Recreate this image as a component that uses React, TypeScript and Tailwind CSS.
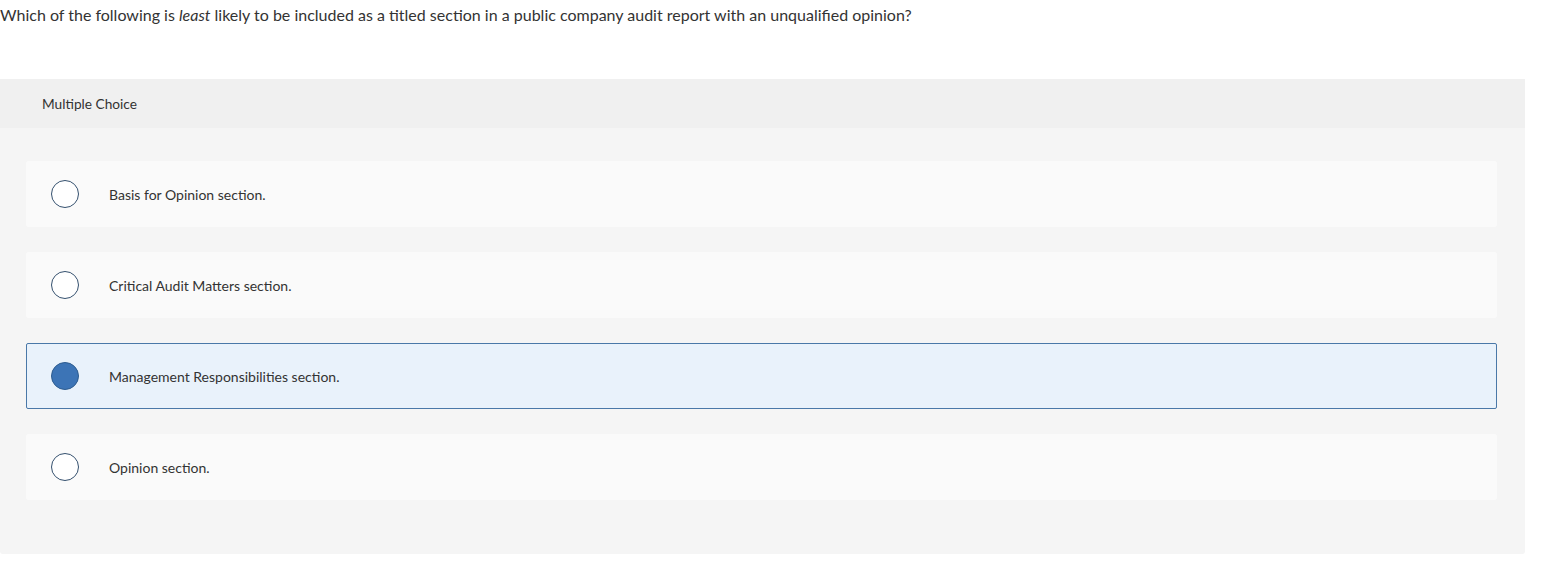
import React from "react";

const options = [
  "Basis for Opinion section.",
  "Critical Audit Matters section.",
  "Management Responsibilities section.",
  "Opinion section.",
];

export default function App() {
  const selected = 2;
  return (
    <div className="min-h-[577px] bg-white text-[#333333] [font-family:Lato,'Open_Sans',sans-serif]">
      <p className="pt-[5px] text-[16px] leading-[20px]">
        Which of the following is <i>least</i> likely to be included as a titled section in a public company audit report with an unqualified opinion?
      </p>

      <div className="mt-[54px] w-[1525px] rounded-[3px] bg-[#f5f5f5]">
        <div className="flex h-[49px] items-center bg-[#f0f0f0] pl-[42px] pt-[1px] text-[13.7px]">Multiple Choice</div>
        <div className="flex flex-col gap-[25px] pb-[54px] pl-[26px] pr-[28px] pt-[33px]">
          {options.map((o, i) => {
            const on = i === selected;
            return (
              <div
                key={o}
                className={
                  on
                    ? "flex h-[66px] items-center rounded-[2px] border border-[#4a78a8] bg-[#e9f2fb] pl-[24px]"
                    : "flex h-[66px] items-center rounded-[2px] border border-[#fafafa] bg-[#fafafa] pl-[24px]"
                }
              >
                <span
                  className={
                    on
                      ? "h-[28px] w-[28px] shrink-0 rounded-full border border-[#2d5c8f] bg-[#3c74b6]"
                      : "h-[28px] w-[28px] shrink-0 rounded-full border-[1.5px] border-[#34506e] bg-white"
                  }
                />
                <span className="ml-[30px] text-[14px]">{o}</span>
              </div>
            );
          })}
        </div>
      </div>
    </div>
  );
}
